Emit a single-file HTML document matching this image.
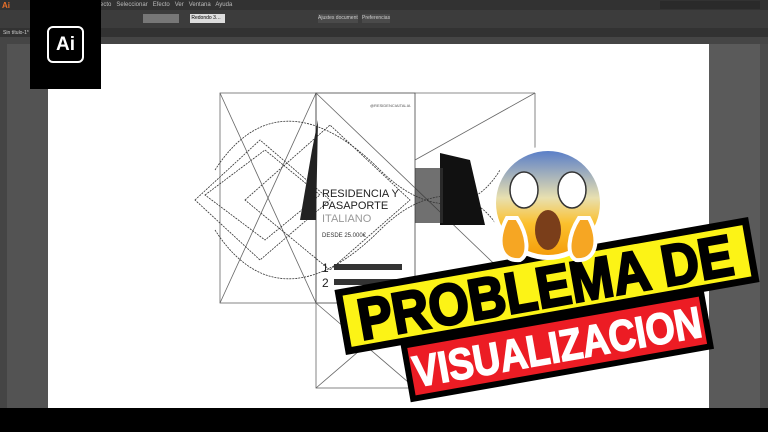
<!DOCTYPE html><html><head><meta charset="utf-8"><style>
body{margin:0;width:768px;height:432px;overflow:hidden;background:#535353;font-family:"Liberation Sans",sans-serif;position:relative}
.a{position:absolute}
</style></head><body>
<div class="a" style="left:0;top:0;width:768px;height:10px;background:#323232"></div>
<div class="a" style="left:0;top:10px;width:768px;height:18px;background:#3c3c3c;border-bottom:1px solid #2a2a2a"></div>
<div class="a" style="left:0;top:28px;width:768px;height:9px;background:#323232"></div>
<div class="a" style="left:0;top:37px;width:768px;height:7px;background:#454545"></div>
<div class="a" style="left:0;top:37px;width:7px;height:371px;background:#454545"></div>
<div class="a" style="left:7px;top:44px;width:41px;height:364px;background:#535353"></div>
<div class="a" style="left:48px;top:44px;width:661px;height:364px;background:#fff"></div>
<div class="a" style="left:709px;top:44px;width:59px;height:364px;background:#5a5a5a"></div>
<div class="a" style="left:760px;top:44px;width:8px;height:364px;background:#4a4a4a"></div>
<div class="a" style="left:0;top:408px;width:768px;height:24px;background:#000"></div>
<div class="a" style="left:100px;top:2px;font-size:6px;color:#bbb;white-space:nowrap">ecto &nbsp; Seleccionar &nbsp; Efecto &nbsp; Ver &nbsp; Ventana &nbsp; Ayuda</div>
<div class="a" style="left:143px;top:14px;width:36px;height:9px;background:#777"></div>
<div class="a" style="left:190px;top:14px;width:35px;height:9px;background:#ddd;font-size:5px;line-height:9px">&nbsp;Redondo 3…</div>
<div class="a" style="left:318px;top:14px;width:40px;height:9px;background:#4a4a4a;font-size:5px;color:#ccc;line-height:9px;white-space:nowrap;overflow:hidden">Ajustes documento</div>
<div class="a" style="left:362px;top:14px;width:28px;height:9px;background:#4a4a4a;font-size:5px;color:#ccc;line-height:9px;overflow:hidden">Preferencias</div>
<div class="a" style="left:660px;top:1px;width:100px;height:8px;background:#2a2a2a"></div>
<div class="a" style="left:3px;top:30px;font-size:5px;color:#ccc">Sin título-1*</div>
<div class="a" style="left:2px;top:1px;font-size:8px;color:#e8702a;font-weight:bold">Ai</div>
<div class="a" style="left:30px;top:0;width:71px;height:89px;background:#000"></div>
<div class="a" style="left:47px;top:26px;width:33px;height:33px;border:2px solid #fff;border-radius:6px;color:#fff;font-weight:bold;font-size:19px;line-height:33px;text-align:center">Ai</div>
<svg class="a" style="left:0;top:0" width="768" height="432">
<g stroke="#666" stroke-width="0.8" fill="none">
<rect x="220" y="93" width="96" height="210"/><line x1="220" y1="93" x2="316" y2="303"/><line x1="316" y1="93" x2="220" y2="303"/>
<rect x="316" y="93" width="99" height="210" stroke="#444"/>
<line x1="415" y1="93" x2="535" y2="93"/><line x1="535" y1="93" x2="535" y2="303"/><line x1="415" y1="303" x2="535" y2="303"/>
<line x1="316" y1="93" x2="535" y2="303"/><line x1="415" y1="160" x2="535" y2="93"/>
<rect x="316" y="303" width="99" height="85"/><line x1="316" y1="303" x2="415" y2="388"/><line x1="415" y1="303" x2="316" y2="388"/>
</g>
<g stroke="#333" stroke-width="0.8" fill="none" stroke-dasharray="2 1">
<path d="M195 200 L260 140 L330 200 L260 260 Z"/><path d="M205 195 L265 150 L320 195 L265 240 Z"/><path d="M245 200 L330 125 L410 200 L330 270 Z"/>
<path d="M215 170 C260 100 320 110 380 170 C420 210 470 220 500 170"/>
<path d="M215 230 C260 300 320 290 380 230 C420 190 470 180 500 230"/>
</g>
<path d="M318 120 L312 150 L300 220 L316 220 Z" fill="#222"/>
<path d="M440 153 L470 160 L485 225 L440 225 Z" fill="#111"/>
<rect x="415" y="168" width="28" height="55" fill="#333" opacity=".7"/>
<text x="322" y="197" font-size="11" fill="#222">RESIDENCIA Y</text>
<text x="322" y="209" font-size="11" fill="#222">PASAPORTE</text>
<text x="322" y="222" font-size="11" fill="#999">ITALIANO</text>
<text x="322" y="237" font-size="6" fill="#333">DESDE 25.000€</text>
<text x="322" y="272" font-size="12" fill="#222">1</text><rect x="334" y="264" width="68" height="6" fill="#333"/>
<text x="322" y="287" font-size="12" fill="#222">2</text><rect x="334" y="279" width="68" height="6" fill="#333"/>
<text x="370" y="107" font-size="4" fill="#555">@RESIDENCIAITALIA</text>
<defs><linearGradient id="g" x1="0" y1="0" x2="0" y2="1"><stop offset="0" stop-color="#5b7fc8"/><stop offset=".45" stop-color="#e8e0b0"/><stop offset=".7" stop-color="#fbc02d"/><stop offset="1" stop-color="#f59e0b"/></linearGradient></defs>
<g transform="rotate(-10 547 286)">
<rect x="337" y="253" width="420" height="66" fill="#000"/>
<rect x="344" y="260" width="406" height="52" fill="#fcf316"/>
<text x="545" y="307" font-size="58" font-weight="900" text-anchor="middle" fill="#000" stroke="#000" stroke-width="2.5" font-family="Liberation Sans" textLength="380" lengthAdjust="spacingAndGlyphs">PROBLEMA DE</text>
</g>
<g transform="rotate(-10 557 345)">
<rect x="403" y="316" width="308" height="60" fill="#000"/>
<rect x="409" y="322" width="296" height="48" fill="#ec1c24"/>
<text x="557" y="362" font-size="44" font-weight="900" text-anchor="middle" fill="#fff" stroke="#fff" stroke-width="1.5" font-family="Liberation Sans" textLength="292" lengthAdjust="spacingAndGlyphs">VISUALIZACION</text>
</g>
<circle cx="548" cy="203" r="57" fill="#fff"/>
<circle cx="548" cy="203" r="52" fill="url(#g)"/>
<ellipse cx="524" cy="190" rx="14" ry="18" fill="#fff" stroke="#333" stroke-width="1.5"/>
<ellipse cx="572" cy="190" rx="14" ry="18" fill="#fff" stroke="#333" stroke-width="1.5"/>
<ellipse cx="548" cy="230" rx="13" ry="20" fill="#7a3e1a"/>
<path d="M507 218 C495 240 500 262 520 260 C530 255 528 235 517 218 Z" fill="#f6a623" stroke="#fff" stroke-width="4"/>
<path d="M589 218 C601 240 596 262 576 260 C566 255 568 235 579 218 Z" fill="#f6a623" stroke="#fff" stroke-width="4"/>
</svg>
</body></html>
